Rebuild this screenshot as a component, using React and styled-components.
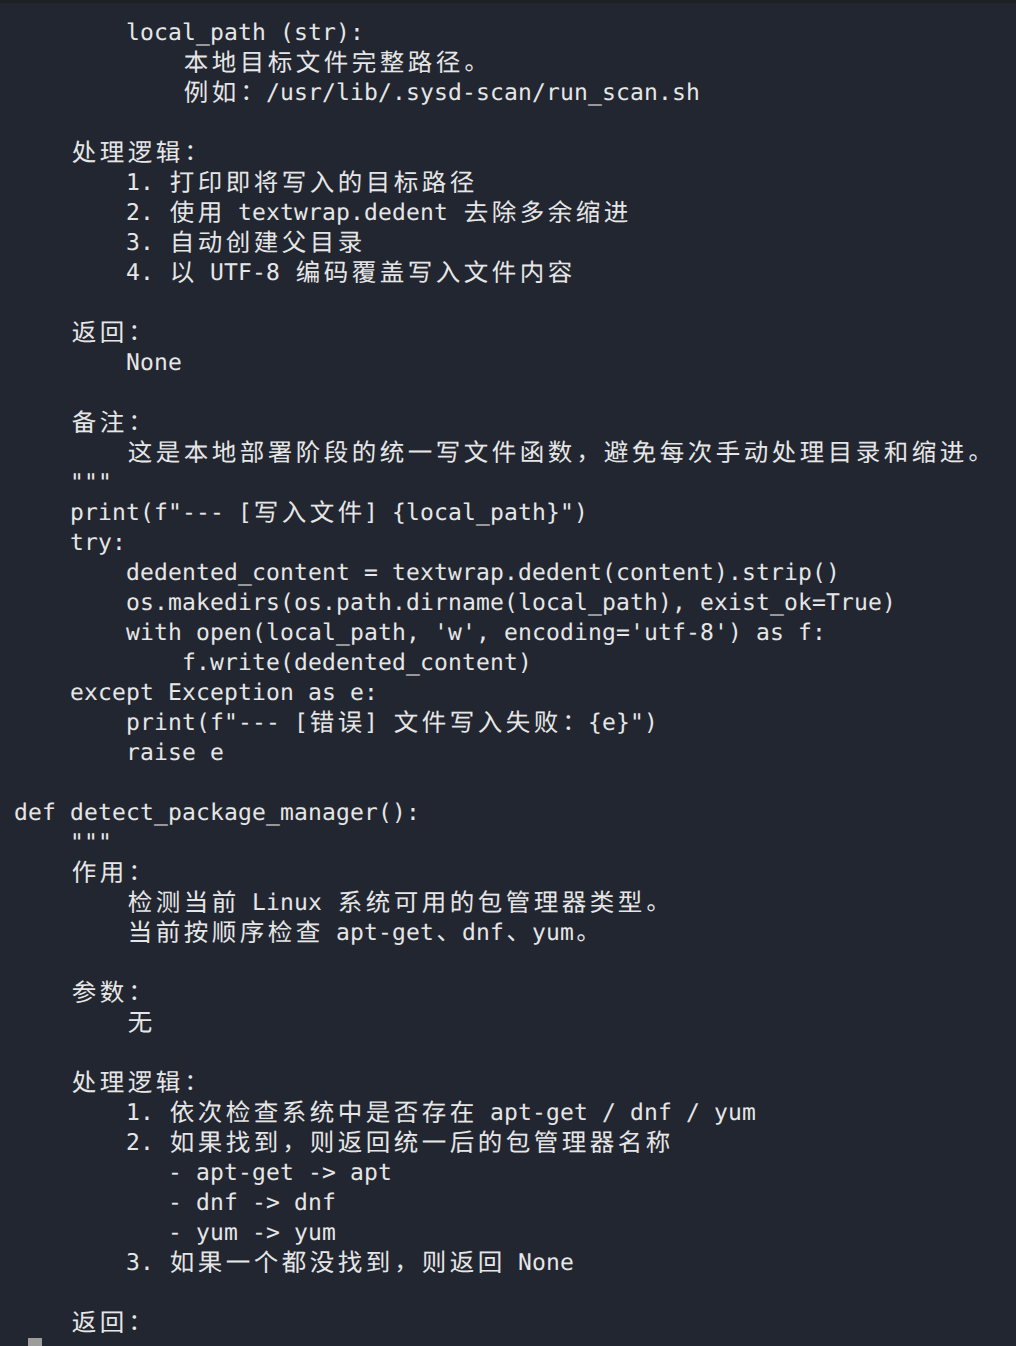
import React from "react";
import styled, { createGlobalStyle } from "styled-components";

const Global = createGlobalStyle`
  html, body {
    margin: 0;
    padding: 0;
    background: #222631;
    overflow: hidden;
  }
`;

const Screen = styled.div`
  height: 100vh;
  overflow: hidden;
  background: #222631;
  display: flex;
  flex-direction: column;
`;

const TopStrip = styled.div`
  height: 3px;
  flex: none;
  background: #1f2023;
`;

const Buffer = styled.pre`
  margin: 0;
  padding: 15px 0 0 14px;
  font-family: "DejaVu Sans Mono", "Noto Sans CJK SC", monospace;
  font-size: 23px;
  letter-spacing: 0.153px;
  line-height: 30px;
  color: #e6e6e6;
  text-rendering: geometricPrecision;
`;

const Line = styled.div`
  height: 30px;
  white-space: pre;
`;

const Wide = styled.span`
  display: inline-block;
  vertical-align: top;
  width: 28px;
  height: 30px;
  letter-spacing: 0;
  text-align: center;
  font-size: ${(p) => (p.$punct ? "23.25px" : "24.5px")};
`;

const Cursor = styled.span`
  display: inline-block;
  vertical-align: top;
  width: 14px;
  height: 30px;
  margin-left: 14px;
  background: #9d9d9d;
`;

const lines = [
  "        local_path (str):",
  "            本地目标文件完整路径。",
  "            例如：/usr/lib/.sysd-scan/run_scan.sh",
  "",
  "    处理逻辑：",
  "        1. 打印即将写入的目标路径",
  "        2. 使用 textwrap.dedent 去除多余缩进",
  "        3. 自动创建父目录",
  "        4. 以 UTF-8 编码覆盖写入文件内容",
  "",
  "    返回：",
  "        None",
  "",
  "    备注：",
  "        这是本地部署阶段的统一写文件函数，避免每次手动处理目录和缩进。",
  '    """',
  '    print(f"--- [写入文件] {local_path}")',
  "    try:",
  "        dedented_content = textwrap.dedent(content).strip()",
  "        os.makedirs(os.path.dirname(local_path), exist_ok=True)",
  "        with open(local_path, 'w', encoding='utf-8') as f:",
  "            f.write(dedented_content)",
  "    except Exception as e:",
  '        print(f"--- [错误] 文件写入失败：{e}")',
  "        raise e",
  "",
  "def detect_package_manager():",
  '    """',
  "    作用：",
  "        检测当前 Linux 系统可用的包管理器类型。",
  "        当前按顺序检查 apt-get、dnf、yum。",
  "",
  "    参数：",
  "        无",
  "",
  "    处理逻辑：",
  "        1. 依次检查系统中是否存在 apt-get / dnf / yum",
  "        2. 如果找到，则返回统一后的包管理器名称",
  "           - apt-get -> apt",
  "           - dnf -> dnf",
  "           - yum -> yum",
  "        3. 如果一个都没找到，则返回 None",
  "",
  "    返回：",
];

const WIDE_RE = /[\u1100-\u115F\u2E80-\uA4CF\uAC00-\uD7A3\uF900-\uFAFF\uFE30-\uFE4F\uFF00-\uFF60\uFFE0-\uFFE6]/;
const PUNCT_RE = /[\u3000-\u303F\uFF00-\uFF60]/;

function renderLine(text) {
  const out = [];
  let buf = "";
  [...text].forEach((ch, i) => {
    if (WIDE_RE.test(ch)) {
      if (buf) {
        out.push(buf);
        buf = "";
      }
      out.push(
        <Wide key={i} $punct={PUNCT_RE.test(ch)}>
          {ch}
        </Wide>
      );
    } else {
      buf += ch;
    }
  });
  if (buf) out.push(buf);
  return out;
}

export default function App() {
  return (
    <Screen>
      <Global />
      <TopStrip />
      <Buffer>
        {lines.map((l, i) => (
          <Line key={i}>{l ? renderLine(l) : " "}</Line>
        ))}
        <Line>
          <Cursor />
        </Line>
      </Buffer>
    </Screen>
  );
}
